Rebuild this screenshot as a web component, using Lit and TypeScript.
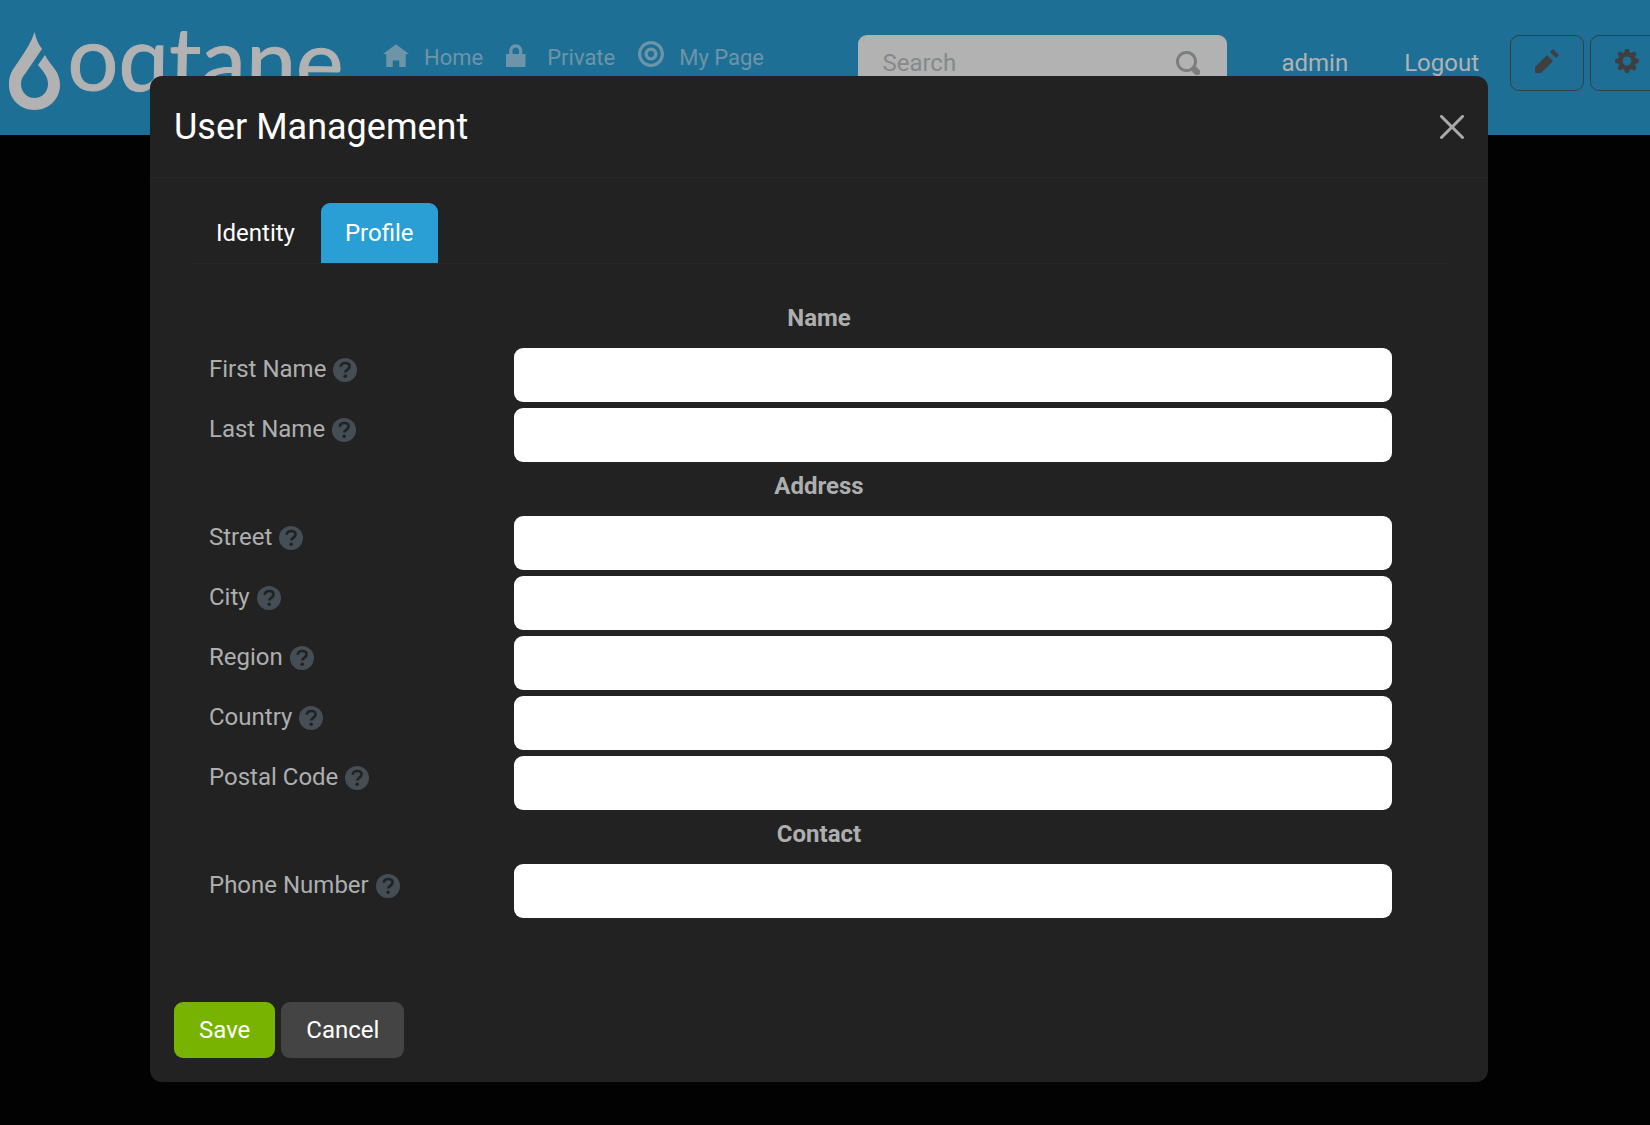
import { LitElement, html, css, svg } from "lit";
import { customElement, state } from "lit/decorators.js";

const ICONS = {
  home: "M4 1l-4 3h1v4h2v-2h2v2h2v-4.03l1 .03-4-3z",
  lock: "M3 1c-1.1 0-2 .9-2 2v1h-1v4h6v-4h-1v-1c0-1.1-.9-2-2-2zm0 1c.56 0 1 .44 1 1v1h-2v-1c0-.56.44-1 1-1z",
  target:
    "M4 0c-2.2 0-4 1.8-4 4s1.8 4 4 4 4-1.8 4-4-1.8-4-4-4zm0 1c1.66 0 3 1.34 3 3s-1.34 3-3 3-3-1.34-3-3 1.34-3 3-3zm0 1c-1.1 0-2 .9-2 2s.9 2 2 2 2-.9 2-2-.9-2-2-2zm0 1c.56 0 1 .44 1 1s-.44 1-1 1-1-.44-1-1 .44-1 1-1z",
  search:
    "M3.5 0c-1.93 0-3.5 1.57-3.5 3.5s1.57 3.5 3.5 3.5c.59 0 1.17-.14 1.66-.41a1 1 0 0 0 .13.13l1 1a1.02 1.02 0 1 0 1.44-1.44l-1-1a1 1 0 0 0-.16-.13c.27-.49.44-1.06.44-1.66 0-1.93-1.55-3.5-3.5-3.5zm0 1c1.39 0 2.5 1.11 2.5 2.5 0 .66-.24 1.27-.66 1.72-.01.01-.02.02-.03.03a1 1 0 0 0-.13.13c-.44.4-1.04.63-1.69.63-1.39 0-2.5-1.11-2.5-2.5s1.11-2.5 2.5-2.5z",
  pencil: "M6 0l-1 1 2 2 1-1-2-2zm-2 2l-4 4v2h2l4-4-2-2z",
  cog: "M3.5 0l-.5 1.19c-.1.03-.19.08-.28.13l-1.19-.5-.72.72.5 1.19c-.05.1-.09.18-.13.28l-1.19.5v1l1.19.5c.04.1.08.18.13.28l-.5 1.19.72.72 1.19-.5c.09.04.18.09.28.13l.5 1.19h1l.5-1.19c.09-.04.19-.08.28-.13l1.19.5.72-.72-.5-1.19c.04-.09.09-.19.13-.28l1.19-.5v-1l-1.19-.5c-.03-.09-.08-.19-.13-.28l.5-1.19-.72-.72-1.19.5c-.09-.04-.19-.09-.28-.13l-.5-1.19h-1zm.5 2.5c.83 0 1.5.67 1.5 1.5s-.67 1.5-1.5 1.5-1.5-.67-1.5-1.5.67-1.5 1.5-1.5z",
};

const icon = (name: keyof typeof ICONS, cls = "icon") => html`
  <svg class=${cls} viewBox="0 0 8 8" fill="currentColor" aria-hidden="true">
    ${svg`<path d=${ICONS[name]}></path>`}
  </svg>
`;

const SECTIONS = [
  { title: "Name", fields: ["First Name", "Last Name"] },
  { title: "Address", fields: ["Street", "City", "Region", "Country", "Postal Code"] },
  { title: "Contact", fields: ["Phone Number"] },
];

@customElement("site-header")
class SiteHeader extends LitElement {
  static styles = css`
    :host {
      display: block;
      overflow: hidden;
      background: #1e6f96;
    }
    .bar {
      display: flex;
      align-items: flex-start;
      height: 135px;
      margin-right: -14px;
    }
    .logo {
      flex: none;
      width: 383px;
      height: 135px;
    }
    .word {
      font-family: Lato, sans-serif;
      font-size: 90px;
      stroke: #b2b2b2;
      stroke-width: 1px;
    }
    nav {
      display: flex;
      flex: none;
      padding-top: 41px;
      gap: 23px;
    }
    .item {
      display: flex;
      align-items: center;
      gap: 15px;
      height: 34px;
      font-size: 22px;
      line-height: 34px;
      color: #6e94a7;
      text-decoration: none;
    }
    .nav-icon {
      width: 26px;
      height: 26px;
      margin-bottom: 8px;
    }
    .tools {
      display: flex;
      align-items: center;
      height: 56px;
      margin-top: 35px;
      margin-left: auto;
    }
    .search {
      display: flex;
      align-items: center;
      box-sizing: border-box;
      width: 369px;
      height: 56px;
      padding: 0 27px 0 24px;
      border-radius: 9px;
      background: #b2b2b2;
      color: #7b7e7e;
      margin-right: 54px;
    }
    .search input {
      flex: 1;
      min-width: 0;
      padding: 0;
      border: 0;
      outline: 0;
      background: none;
      font: inherit;
      color: #333;
    }
    .search input::placeholder {
      color: #868989;
      opacity: 1;
    }
    .search button {
      padding: 0;
      border: 0;
      background: none;
      color: inherit;
    }
    .icon {
      display: block;
      width: 24px;
      height: 24px;
    }
    .link {
      margin-right: 56px;
      color: #b2b2b2;
      text-decoration: none;
    }
    .link.last {
      margin-right: 31px;
    }
    .tool {
      display: flex;
      align-items: flex-start;
      justify-content: center;
      box-sizing: border-box;
      width: 74px;
      height: 56px;
      padding: 13px 0 0;
      border: 1px solid #3b3d3f;
      border-radius: 9px;
      background: none;
      color: #3f3f3f;
    }
    .tool + .tool {
      margin-left: 6px;
    }
  `;

  render() {
    return html`
      <header class="bar">
        <svg class="logo" viewBox="0 0 383 135" fill="#b2b2b2" role="img" aria-label="oqtane">
          <path
            d="M34.5 32C31 44 22 56 14 68C9 75 9 81 9 85C9 99 20 110 34.5 110C49 110 60 99 60 85C60 79 58 74 56 71C52 65 48 61 45 55L38 65C42 70 48 76 48 84C48 92 42 98 34.5 98C27 98 21 92 21 84C21 79 23 76 25 74L42 49C38 44 36 38 34.5 32Z"
          ></path>
          <text class="word" x="67" y="90" transform="rotate(1 70 90)">oqtane</text>
        </svg>
        <nav aria-label="Main">
          <a class="item" href="#home">${icon("home", "nav-icon")}Home</a>
          <a class="item" href="#private">${icon("lock", "nav-icon")}Private</a>
          <a class="item" href="#my-page">${icon("target", "nav-icon")}My Page</a>
        </nav>
        <div class="tools">
          <div class="search">
            <input type="search" placeholder="Search" aria-label="Search" />
            <button type="button" aria-label="Submit search">${icon("search")}</button>
          </div>
          <a class="link" href="#admin">admin</a>
          <a class="link last" href="#logout">Logout</a>
          <button class="tool" type="button" aria-label="Edit">${icon("pencil")}</button>
          <button class="tool" type="button" aria-label="Settings">${icon("cog")}</button>
        </div>
      </header>
    `;
  }
}

@customElement("profile-form")
class ProfileForm extends LitElement {
  static styles = css`
    :host {
      display: block;
      color: #adafae;
    }
    h2 {
      margin: 0;
      padding: 3px 0 9px;
      font-size: 24px;
      line-height: 36px;
      font-weight: 700;
      text-align: center;
    }
    .row {
      display: grid;
      grid-template-columns: 1fr 3fr;
      padding: 3px 0;
    }
    .name {
      display: flex;
      align-items: center;
      gap: 7px;
      height: 36px;
      padding-top: 3px;
      line-height: 36px;
    }
    .help {
      width: 24px;
      height: 24px;
      margin-top: 2px;
    }
    .field {
      padding-right: 37px;
    }
    input {
      display: block;
      box-sizing: border-box;
      width: 100%;
      height: 54px;
      padding: 0 18px;
      border: 0;
      border-radius: 9px;
      background: #fff;
      color: #212529;
      font: inherit;
    }
  `;

  private row(label: string) {
    const id = label.toLowerCase().replace(/ /g, "-");
    return html`
      <div class="row">
        <div class="name">
          <label for=${id}>${label}</label>
          <svg class="help" viewBox="0 0 24 24" aria-hidden="true">
            <circle cx="12" cy="12" r="12" fill="#454d55"></circle>
            <path
              d="M7.6 8.8C8 6.2 9.8 5 12.2 5C14.8 5 16.6 6.4 16.6 8.6C16.6 11.4 12.4 11.8 12.4 14.6"
              fill="none"
              stroke="#222"
              stroke-width="2.6"
            ></path>
            <circle cx="12.2" cy="18.2" r="1.8" fill="#222"></circle>
          </svg>
        </div>
        <div class="field"><input id=${id} type="text" /></div>
      </div>
    `;
  }

  render() {
    return SECTIONS.map((s) => html`<h2>${s.title}</h2>${s.fields.map((f) => this.row(f))}`);
  }
}

@customElement("app-root")
class AppRoot extends LitElement {
  static styles = css`
    :host {
      display: block;
      min-height: 100vh;
      background: #020202;
      font-family: Roboto, sans-serif;
      font-size: 24px;
      line-height: 36px;
    }
    .layer {
      position: absolute;
      inset: 0;
      padding: 76px 162px 43px 150px;
    }
    .dialog {
      border-radius: 12px;
      background: #222;
      color: #fff;
    }
    .head {
      display: flex;
      align-items: center;
      justify-content: space-between;
      box-sizing: border-box;
      height: 102px;
      padding: 0 24px;
      border-bottom: 1px solid #282828;
    }
    h1 {
      margin: 0;
      font-size: 36px;
      line-height: 54px;
      font-weight: 400;
    }
    .close {
      padding: 0;
      border: 0;
      background: none;
      color: #aaa;
    }
    .close svg {
      display: block;
      width: 24px;
      height: 24px;
    }
    .body {
      padding: 25px 24px 24px;
    }
    .tabs {
      display: flex;
      gap: 2px;
      margin: 0 16px 0 18px;
      border-bottom: 1px solid #282828;
    }
    .tab {
      height: 60px;
      padding: 0 24px;
      border: 0;
      border-radius: 9px 9px 0 0;
      background: none;
      color: #fff;
      font: inherit;
    }
    .tab.active {
      background: #2a9fd6;
    }
    .panel {
      margin: 33px 35px 81px;
    }
    .actions {
      display: flex;
      gap: 6px;
    }
    .btn {
      height: 56px;
      padding: 0 25px;
      border: 0;
      border-radius: 9px;
      color: #fff;
      font: inherit;
    }
    .save {
      background: #77b300;
    }
    .cancel {
      background: #444;
    }
  `;

  @state() private tab = "Profile";

  render() {
    return html`
      <site-header></site-header>
      <div class="layer">
        <section class="dialog" role="dialog" aria-labelledby="title">
          <div class="head">
            <h1 id="title">User Management</h1>
            <button class="close" type="button" aria-label="Close">
              <svg viewBox="0 0 16 16" fill="currentColor" aria-hidden="true">
                <path
                  d="M.293.293a1 1 0 0 1 1.414 0L8 6.586 14.293.293a1 1 0 1 1 1.414 1.414L9.414 8l6.293 6.293a1 1 0 0 1-1.414 1.414L8 9.414l-6.293 6.293a1 1 0 0 1-1.414-1.414L6.586 8 .293 1.707a1 1 0 0 1 0-1.414z"
                ></path>
              </svg>
            </button>
          </div>
          <div class="body">
            <div class="tabs" role="tablist">
              ${["Identity", "Profile"].map(
                (t) => html`<button
                  class="tab ${this.tab === t ? "active" : ""}"
                  type="button"
                  role="tab"
                  aria-selected=${this.tab === t ? "true" : "false"}
                  @click=${() => (this.tab = t)}
                >${t}</button>`
              )}
            </div>
            <profile-form class="panel"></profile-form>
            <div class="actions">
              <button class="btn save" type="button">Save</button>
              <button class="btn cancel" type="button">Cancel</button>
            </div>
          </div>
        </section>
      </div>
    `;
  }
}
